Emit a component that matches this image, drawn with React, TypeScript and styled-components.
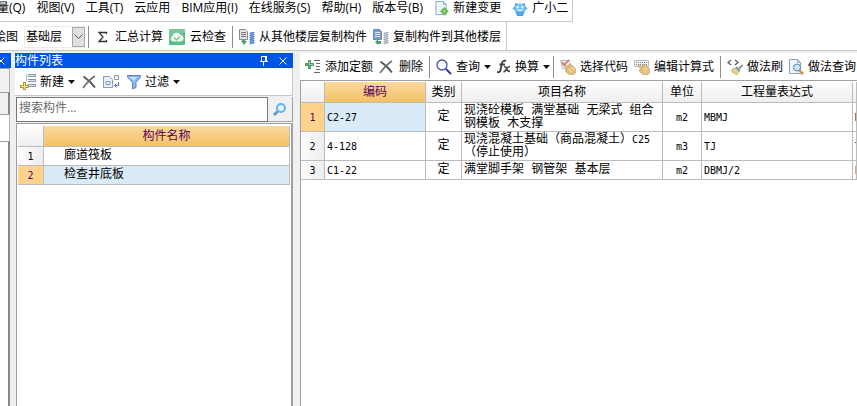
import React from "react";
import styled, { createGlobalStyle, css } from "styled-components";

const GlobalStyle = createGlobalStyle`
  * { box-sizing: border-box; }
  body {
    margin: 0;
    overflow: hidden;
    background: #fff;
    color: #000;
    font: 12px/16px "Open Sans", "Noto Sans CJK SC", sans-serif;
  }
  button, input, select { font: inherit; color: inherit; }
  button { border: 0; padding: 0; background: none; }
`;

const Window = styled.div`
  display: flex;
  flex-direction: column;
  height: 100vh;
  overflow: hidden;
`;

const MenuBar = styled.nav`
  display: flex;
  align-items: flex-start;
  align-self: flex-start;
  gap: 11px;
  height: 22px;
  flex: none;
  padding-right: 4px;
  border-right: 1px solid #c8c8c8;
  border-bottom: 1px solid #c8c8c8;
`;

const MenuItem = styled.button<{ $clip?: number }>`
  display: flex;
  align-items: center;
  gap: 4px;
  flex: none;
  height: 16px;
  white-space: nowrap;
  margin-left: ${(p) => -(p.$clip ?? 0)}px;
  svg { height: 15px; }
`;

const ToolStrip = styled.div`
  flex: none;
  height: 29px;
  border-bottom: 1px solid #c8c8c8;
`;

const ToolGroup = styled.div`
  display: inline-flex;
  align-items: center;
  height: 28px;
  gap: 6px;
  padding: 1px 5px 0 0;
  border-right: 1px solid #c8c8c8;
`;

const ToolButton = styled.button<{ $clip?: number; $gap?: number }>`
  display: flex;
  align-items: center;
  gap: ${(p) => p.$gap ?? 4}px;
  flex: none;
  height: 20px;
  white-space: nowrap;
  margin-left: ${(p) => -(p.$clip ?? 0)}px;
`;

const Divider = styled.span<{ $tight?: boolean }>`
  flex: none;
  width: 1px;
  height: 22px;
  margin-left: ${(p) => (p.$tight ? -3 : 0)}px;
  background: #8c8c8c;
`;

const FloorPicker = styled.label`
  display: grid;
  grid-template-columns: 47px 13px;
  height: 22px;
  align-items: stretch;
  margin-right: -3px;
  border: 1px solid #ececec;
  border-right: 0;
  & > * { grid-row: 1; }
  & > span {
    grid-column: 2;
    display: grid;
    place-items: center;
    background: #e0e0e0;
    border: 1px solid #a8a8a8;
    pointer-events: none;
  }
`;

const FloorSelect = styled.select`
  grid-column: 1 / 3;
  appearance: none;
  border: 0;
  background: transparent;
  padding: 0 0 0 1px;
  outline: 0;
`;

const Workspace = styled.main`
  display: flex;
  flex: 1;
  min-height: 0;
  padding-top: 2px;
  background: #f0f0f0;
`;

const SideStub = styled.aside`
  width: 11px;
  flex: none;
  display: flex;
  flex-direction: column;
`;

const TitleBar = styled.header<{ $stub?: boolean }>`
  display: flex;
  align-items: center;
  flex: none;
  height: 15px;
  gap: 11px;
  padding-right: 6px;
  margin-left: ${(p) => (p.$stub ? -3 : 0)}px;
  background: #0055e6;
  color: #fff;
  h2 { margin: 0; flex: 1; font-size: 12px; font-weight: 400; line-height: 15px; }
  button { display: flex; }
`;

const StubBox = styled.div<{ $height?: number; $shade?: string; $dark?: boolean }>`
  ${(p) => (p.$height ? `height: ${p.$height}px; flex: none;` : "flex: 1;")}
  margin-right: 1px;
  background: ${(p) => p.$shade ?? "#fff"};
  border-top: 1px solid #a0a0a0;
  border-right: ${(p) => (p.$dark ? "2px solid #888" : "1px solid #b4b4b4")};
`;

const ListPanel = styled.section`
  display: flex;
  flex-direction: column;
  flex: none;
  width: 278px;
  margin: 0 7px 0 4px;
`;

const ListTools = styled.div`
  display: flex;
  align-items: center;
  gap: 7px;
  height: 28px;
  flex: none;
  padding: 1px 5px 0;
  background: #fff;
  border-bottom: 1px solid #c8c8c8;
  border-right: 1px solid #c8c8c8;
`;

const SearchRow = styled.form`
  display: flex;
  height: 25px;
  flex: none;
  margin: 1px 0 0 1px;
  border-right: 1px solid #a0a0a0;
  input {
    flex: 1;
    min-width: 0;
    border: 1px solid #767676;
    background: #fff;
    padding: 0 2px 3px;
    outline: 0;
  }
  input::placeholder { color: #6d6d6d; opacity: 1; }
  button { width: 24px; display: grid; place-items: center; border-bottom: 1px solid #a8a8a8; }
`;

const ListBody = styled.div`
  flex: 1;
  margin: 1px 0 0 1px;
  padding: 2px 1px 0;
  background: #fff;
  border: solid #a0a0a0;
  border-width: 1px 2px 0 1px;
`;

const DetailPanel = styled.section`
  display: flex;
  flex-direction: column;
  flex: 1;
  min-width: 0;
  background: #fff;
`;

const DetailTools = styled.div`
  display: flex;
  align-items: center;
  gap: 6px;
  height: 27px;
  flex: none;
  padding-left: 5px;
  overflow: hidden;
`;

const DetailBody = styled.div`
  flex: 1;
  overflow: hidden;
  border-top: 1px solid #a0a0a0;
  border-left: 1px solid #a0a0a0;
  padding-top: 1px;
`;

const Grid = styled.table`
  width: 100%;
  border-collapse: separate;
  border-spacing: 0;
  table-layout: fixed;
  font: 12px/13px "Liberation Mono", "Noto Sans CJK SC", monospace;
`;

const Col = styled.col<{ $w?: number }>`
  width: ${(p) => (p.$w ? `${p.$w}px` : "auto")};
`;

const Row = styled.tr<{ $h: number }>`
  height: ${(p) => p.$h}px;
`;

const cell = css`
  padding: 1px 0 0;
  overflow: hidden;
  white-space: nowrap;
  font-weight: 400;
  border-right: 1px solid #bcbcbc;
  border-bottom: 1px solid #bcbcbc;
`;

const Head = styled.th<{ $active?: boolean }>`
  ${cell}
  padding-top: 2px;
  text-align: center;
  color: ${(p) => (p.$active ? "#5a005a" : "#000")};
  background: ${(p) =>
    p.$active ? "linear-gradient(#fbd9a0, #f2c264)" : "linear-gradient(#fdfdfd, #eeeeee)"};
`;

const Num = styled.th<{ $active?: boolean }>`
  ${cell}
  padding-top: 0;
  text-align: center;
  font: 10px/13px "DejaVu Sans Mono", monospace;
  color: ${(p) => (p.$active ? "#5a005a" : "#000")};
  background: ${(p) => (p.$active ? "#ffd38c" : "linear-gradient(90deg, #fcfcfc, #eeeeee)")};
`;

const Cell = styled.td<{ $active?: boolean; $center?: boolean; $indent?: number }>`
  ${cell}
  text-align: ${(p) => (p.$center ? "center" : "left")};
  padding-left: ${(p) => (p.$center ? 0 : p.$indent ?? 2)}px;
  background: ${(p) => (p.$active ? "#d9eaf8" : "#fff")};
`;

const Code = styled.span`
  font: 10px/13px "DejaVu Sans Mono", monospace;
`;

const Glyph = styled.svg`
  display: block;
  flex: none;
`;

type IconProps = { w?: number; children: React.ReactNode };
const Icon = ({ w = 16, children }: IconProps) => (
  <Glyph width={w} height="16" viewBox={`0 0 ${w} 16`} fill="none" aria-hidden="true">
    {children}
  </Glyph>
);

const Caret = () => (
  <Glyph width="7" height="4" viewBox="0 0 7 4" aria-hidden="true">
    <path d="M0 0h7L3.5 4z" fill="#111" />
  </Glyph>
);

const CloseIcon = () => (
  <Glyph width="8" height="8" viewBox="0 0 8 8" aria-hidden="true">
    <path d="M.5.5l7 7M7.5.5l-7 7" stroke="#fff" />
  </Glyph>
);

const PinIcon = () => (
  <Glyph width="8" height="10" viewBox="0 0 8 10" fill="none" aria-hidden="true">
    <path d="M1.500 5.500v-5h4v5M0 5.500h8M3.500 6v4" stroke="#fff" />
    <path d="M5 0h2v5H5z" fill="#fff" />
  </Glyph>
);

const NewDocIcon = () => (
  <Icon w={15}>
    <path d="M1.5.5h8l3 3v11h-11z" fill="#edf6fb" stroke="#83aabd" />
    <path d="M9.5.5v3h3" fill="#cce3ef" stroke="#83aabd" />
    <path d="M10.500 6.500l4.500 4.500-4.500 4.500L6 11z" fill="#64b84b" />
    <path d="M10.500 9v4M8.500 11h4" stroke="#a5e088" />
  </Icon>
);

const RobotIcon = () => (
  <Icon>
    <path d="M3 2l3 1h4l3-1 .5 3L16 8l-2.500 2-1 2.500L11 16H5l-1.500-3.500-1-2.500L0 8l2.500-3z" fill="#4fa6e6" />
    <ellipse cx="8" cy="7.500" rx="6" ry="4.500" fill="#7cc4f3" />
    <circle cx="5.500" cy="6.500" r="1.200" fill="#fff" />
    <circle cx="10.500" cy="6.500" r="1.200" fill="#fff" />
    <path d="M5 9q3 2.500 6 0" stroke="#fff" />
  </Icon>
);

const CloudCheckIcon = () => (
  <Icon>
    <rect y="0" width="16" height="16" rx="1" fill="#58bd85" />
    <path d="M0 0h16v3L0 12z" fill="#80ce9e" opacity=".7" />
    <path d="M4 12.500a3 3 0 01-.5-5.500A4.300 4.300 0 0111.500 6a3.300 3.300 0 01.5 6.500z" fill="#f1f8f3" />
    <path d="M5 8.500L7.500 11 11 7.500" stroke="#7cc59b" strokeWidth="1.300" />
  </Icon>
);

const CopyFromIcon = ({ blue }: { blue?: boolean }) => (
  <Icon>
    <path d="M.5.5h6l2 2v8h-8z" fill={blue ? "#7f9bd2" : "#e3e3e3"} stroke={blue ? "#6c88c2" : "#8b8b8b"} />
    <path d="M2 3.500h5M2 5.500h5M2 7.500h5" stroke={blue ? "#dfe8fb" : "#777"} />
    <path d="M11 4q2-2 4-1v12q-2-1-4 1z" fill={blue ? "#dfe4e9" : "#8db2e7"} />
    <path
      d="M10.500 4.500l5-1M10.500 6.500l5-1M10.500 8.500l5-1M10.500 10.500l5-1M10.500 12.500l5-1M10.500 14.500l5-1"
      stroke={blue ? "#8998a7" : "#457ac3"}
    />
    <path d={blue ? "M2 13l3-3v2h3v3H5v1z" : "M3 11h3v1h2l-3 4-3-4h1z"} fill="#48a46c" />
  </Icon>
);

const AddItemIcon = () => (
  <Icon w={16}>
    <path d="M6.500 0v7" stroke="#a9b5c4" />
    <path d="M8 1.500h8M8 6.500h8M8 11.500h8" stroke="#8498b1" strokeWidth="3" />
    <path d="M8 1.500h7M8 6.500h7M8 11.500h7" stroke="#dbe5ee" />
    <path d="M3 8h3v3h3v3H6v2H3v-2H0v-3h3z" fill="#b9972c" />
    <path d="M4 9h1v3h3v1H5v2H4v-2H1v-1h3z" fill="#ffe88e" />
  </Icon>
);

const DeleteIcon = () => (
  <Icon w={14}>
    <path d="M1.500 2.500q6 4 11.500 11" stroke="#555" strokeWidth="2" />
    <path d="M13 2Q7 6 1 14" stroke="#707070" strokeWidth="1.600" />
  </Icon>
);

const CopyIcon = () => (
  <Icon w={17}>
    <path d="M.5 2.500h6l3 3v8h-9z" fill="#e9eff7" stroke="#8b9bb3" />
    <path d="M3 7.500h4v3H3z" stroke="#8b9bb3" />
    <path d="M11.500 1.500h4v4h-4z" fill="#f1f5fb" stroke="#8b9bb3" />
    <path d="M15.500 8v3.500h-4m2-2l-2 2 2 2" stroke="#5372d6" />
  </Icon>
);

const FunnelIcon = () => (
  <Icon w={14}>
    <path d="M.5 1.500h13v1.500L9 8.500v5L5.500 15V8.500L.5 3z" fill="#8db7ee" stroke="#5a83c7" />
    <path d="M2 3h8L7 7z" fill="#c8e0fb" />
  </Icon>
);

const SearchIcon = () => (
  <Icon w={14}>
    <path d="M5 10l-4 4" stroke="#4a9ad8" strokeWidth="2.500" />
    <circle cx="8" cy="7" r="4" fill="#e0f5ff" stroke="#62b4e8" strokeWidth="2" />
  </Icon>
);

const AddQuotaIcon = () => (
  <Icon>
    <path d="M3 1h3v3h3v3H6v3H3V7H0V4h3z" fill="#579c66" />
    <path d="M4 2h1v3h3v1H4z" fill="#a1cda8" />
    <path d="M9 1.500h6M11 4.500h4M11 7.500h4M11 10.500h4M9 13.500h6" stroke="#666" />
  </Icon>
);

const QueryIcon = () => (
  <Icon w={16}>
    <path d="M10 10l5 5" stroke="#363d91" strokeWidth="2" />
    <circle cx="6" cy="6" r="5" fill="#f8faff" stroke="#4952a2" strokeWidth="1.300" />
  </Icon>
);

const FxIcon = () => (
  <Icon w={14}>
    <path d="M0 13q3 1 3.500-2L5 4q.8-3 4-2M2.500 5.500H8" stroke="#444" strokeWidth="1.900" />
    <path d="M7 8q2-1 2.500 1.500T13 12.500M13 7.500q-2 0-3.500 2.500T6.500 13" stroke="#444" strokeWidth="1.500" />
  </Icon>
);

const PickCodeIcon = ({ keyboard }: { keyboard?: boolean }) => (
  <Icon>
    <path d={keyboard ? "M.5 1.500h14v6H.5z" : "M.5 1.500h9l2 8h-9z"} fill="#eceef1" stroke="#b4bac2" />
    {keyboard ? (
      <path d="M2 3.500h11M2 5.500h11" stroke="#7f8995" strokeDasharray="1 1" />
    ) : (
      <path d="M2 3l2 3 5-5" stroke="#dd6a5a" strokeWidth="1.500" />
    )}
    <path
      d="M4 6.500l2-.5 3 2.500L8.500 6l1.500-.5 3 1.500 2.500 3v4l-2.500 2H9.500L6 13l-1-2 2-.5z"
      fill="#e2c07f"
      stroke="#bd9a5c"
      strokeWidth=".6"
    />
    <path d="M9 10l3 3M11 8l3 3" stroke="#f6e0b4" />
  </Icon>
);

const BrushIcon = () => (
  <Icon>
    <path d="M4 1L1 3.500 4 6M8 1l3 2.500L8 6" stroke="#555" strokeWidth="1.200" />
    <path d="M15.500 6L12 9.500" stroke="#8d9aa5" strokeWidth="2" />
    <path d="M5 10l3-1 4 3-2 4-5-3z" fill="#ead08c" stroke="#b79a5c" strokeWidth=".6" />
    <path d="M9 8l4 4" stroke="#8295aa" strokeWidth="1.800" />
  </Icon>
);

const DocSearchIcon = () => (
  <Icon w={15}>
    <path d="M.5.5h8l3 3v11H.5z" fill="#f0f5fb" stroke="#91a4bd" />
    <path d="M8.500.5v3h3" stroke="#91a4bd" />
    <path d="M10 11l4 4" stroke="#cf9650" strokeWidth="2.500" />
    <circle cx="8" cy="8.500" r="3.500" fill="#cbe3f6" stroke="#68879f" />
  </Icon>
);

const menus = ["量(Q)", "视图(V)", "工具(T)", "云应用", "BIM应用(I)", "在线服务(S)", "帮助(H)", "版本号(B)"];

const components = ["廊道筏板", "检查井底板"];

const quotas = [
  { code: "C2-27", name: ["现浇砼模板 满堂基础 无梁式 组合", "钢模板 木支撑"], unit: "m2", expr: "MBMJ", h: 29 },
  { code: "4-128", name: ["现浇混凝土基础（商品混凝土）", "（停止使用）"], grade: "C25", unit: "m3", expr: "TJ", h: 29 },
  { code: "C1-22", name: ["满堂脚手架 钢管架 基本层"], unit: "m2", expr: "DBMJ/2", h: 19 },
];

export default function App() {
  return (
    <Window>
      <GlobalStyle />
      <MenuBar>
        {menus.map((m, i) => (
          <MenuItem key={m} $clip={i === 0 ? 3 : 0}>{m}</MenuItem>
        ))}
        <MenuItem><NewDocIcon />新建变更</MenuItem>
        <MenuItem><RobotIcon />广小二</MenuItem>
      </MenuBar>
      <ToolStrip>
        <ToolGroup>
          <ToolButton $clip={6}>绘图</ToolButton>
          <FloorPicker>
            <FloorSelect aria-label="基础层"><option>基础层</option></FloorSelect>
            <span>
              <Glyph width="9" height="6" viewBox="0 0 9 6" fill="none">
                <path d="M.5.5l4 4 4-4" stroke="#555" />
              </Glyph>
            </span>
          </FloorPicker>
          <Divider />
          <ToolButton>
            <Icon><path d="M11.500 5V3.500H4l4 4.500-4 4.500h7.500V11" stroke="#333" strokeWidth="1.300" /></Icon>
            汇总计算
          </ToolButton>
          <ToolButton $gap={5}><CloudCheckIcon />云检查</ToolButton>
          <Divider />
          <ToolButton><CopyFromIcon />从其他楼层复制构件</ToolButton>
          <ToolButton><CopyFromIcon blue />复制构件到其他楼层</ToolButton>
        </ToolGroup>
      </ToolStrip>
      <Workspace>
        <SideStub>
          <TitleBar $stub><button aria-label="关闭侧栏"><CloseIcon /></button></TitleBar>
          <StubBox $height={24} $shade="#f0f0f0" />
          <StubBox $height={22} $shade="#f0f0f0" $dark />
          <StubBox $height={27} />
          <StubBox $dark />
        </SideStub>
        <ListPanel>
          <TitleBar>
            <h2>构件列表</h2>
            <button aria-label="固定"><PinIcon /></button>
            <button aria-label="关闭"><CloseIcon /></button>
          </TitleBar>
          <ListTools>
            <ToolButton>
              <AddItemIcon />新建<Caret />
            </ToolButton>
            <ToolButton aria-label="删除构件"><DeleteIcon /></ToolButton>
            <ToolButton aria-label="复制构件"><CopyIcon /></ToolButton>
            <ToolButton><FunnelIcon />过滤<Caret /></ToolButton>
          </ListTools>
          <SearchRow>
            <input type="text" aria-label="搜索构件" placeholder="搜索构件..." />
            <button type="button" aria-label="搜索"><SearchIcon /></button>
          </SearchRow>
          <ListBody>
            <Grid>
              <colgroup><Col $w={26} /><Col /></colgroup>
              <thead>
                <Row $h={21}><Head /><Head $active>构件名称</Head></Row>
              </thead>
              <tbody>
                {components.map((c, i) => (
                  <Row $h={19} key={c}>
                    <Num $active={i === 1}>{i + 1}</Num>
                    <Cell $indent={20} $active={i === 1}>{c}</Cell>
                  </Row>
                ))}
              </tbody>
            </Grid>
          </ListBody>
        </ListPanel>
        <DetailPanel>
          <DetailTools>
            <ToolButton><AddQuotaIcon />添加定额</ToolButton>
            <ToolButton $gap={6}><DeleteIcon />删除</ToolButton>
            <Divider />
            <ToolButton><QueryIcon />查询<Caret /></ToolButton>
            <ToolButton><FxIcon />换算<Caret /></ToolButton>
            <Divider $tight />
            <ToolButton><PickCodeIcon />选择代码</ToolButton>
            <ToolButton><PickCodeIcon keyboard />编辑计算式</ToolButton>
            <Divider />
            <ToolButton><BrushIcon />做法刷</ToolButton>
            <ToolButton><DocSearchIcon />做法查询</ToolButton>
          </DetailTools>
          <DetailBody>
            <Grid>
              <colgroup>
                <Col $w={24} /><Col $w={101} /><Col $w={36} /><Col $w={201} /><Col $w={39} /><Col $w={151} /><Col />
              </colgroup>
              <thead>
                <Row $h={21}>
                  <Head /><Head $active>编码</Head><Head>类别</Head><Head>项目名称</Head>
                  <Head>单位</Head><Head>工程量表达式</Head><Head />
                </Row>
              </thead>
              <tbody>
                {quotas.map((q, i) => (
                  <Row $h={q.h} key={q.code}>
                    <Num $active={i === 0}>{i + 1}</Num>
                    <Cell $active={i === 0}><Code>{q.code}</Code></Cell>
                    <Cell $center>定</Cell>
                    <Cell>
                      {q.name[0]}
                      {q.grade && <Code>{q.grade}</Code>}
                      {q.name[1] && <><br />{q.name[1]}</>}
                    </Cell>
                    <Cell $center><Code>{q.unit}</Code></Cell>
                    <Cell><Code>{q.expr}</Code></Cell>
                    <Cell><Code>{q.expr}</Code></Cell>
                  </Row>
                ))}
              </tbody>
            </Grid>
          </DetailBody>
        </DetailPanel>
      </Workspace>
    </Window>
  );
}
